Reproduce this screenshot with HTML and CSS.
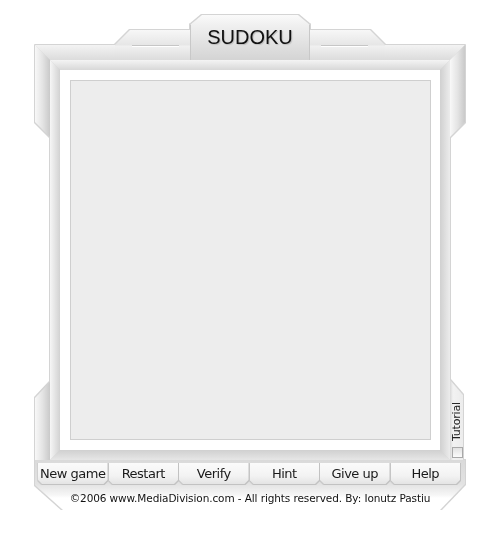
FILE: index.html
```html
<!DOCTYPE html>
<html lang="en">
<head>
<meta charset="utf-8">
<title>Sudoku</title>
<link rel="stylesheet" href="styles.css">
</head>
<body>
<div class="sudoku">
  <div class="bar bar-top-l"></div>
  <div class="tab-side tab-side-l"><span class="tab-rule"></span></div>
  <div class="tab-title"><h1 class="title">SUDOKU</h1></div>
  <div class="tab-side tab-side-r"><span class="tab-rule"></span></div>
  <div class="bar bar-top-r"></div>

  <div class="side side-l">
    <div class="piece piece-l-top"></div>
    <div class="piece piece-l-bottom"></div>
  </div>

  <div class="frame">
    <div class="edge edge-t"></div>
    <div class="edge edge-l"></div>
    <div class="edge edge-r"></div>
    <div class="edge edge-b"></div>
    <div class="well"><div class="board"></div></div>
  </div>

  <div class="side side-r">
    <div class="piece piece-r-top"></div>
    <label class="tutorial">
      <span class="tutorial-text">Tutorial</span>
      <input class="tutorial-check" type="checkbox">
    </label>
  </div>

  <div class="footer">
    <div class="footer-body">
      <nav class="buttons">
        <button class="btn" type="button">New game</button>
        <button class="btn" type="button">Restart</button>
        <button class="btn" type="button">Verify</button>
        <button class="btn" type="button">Hint</button>
        <button class="btn" type="button">Give up</button>
        <button class="btn" type="button">Help</button>
      </nav>
      <p class="copyright">©2006 www.MediaDivision.com - All rights reserved. By: Ionutz Pastiu</p>
    </div>
  </div>
</div>
</body>
</html>
```

FILE: styles.css
```css
html, body {
  margin: 0;
  background: #ffffff;
}

/* Skin laid out on a fixed grid: side bars | centre columns | side bars */
.sudoku {
  display: grid;
  grid-template-columns: 15px 65px 75px 120px 75px 65px 15px;
  grid-template-rows: 15px 15px 15px 400px 25px 25px;
  width: 430px;
  margin: 15px 0 0 35px;
  filter:
    drop-shadow(1px 0 0 #d4d4d4)
    drop-shadow(-1px 0 0 #d4d4d4)
    drop-shadow(0 1px 0 #d4d4d4)
    drop-shadow(0 -1px 0 #d4d4d4);
}

/* ---- top bars and tabs ---- */
.bar {
  background: linear-gradient(#f3f3f3, #dcdcdc);
}
.bar-top-l {
  grid-area: 3 / 1 / 4 / 3;
  clip-path: polygon(0 0, 100% 0, 100% 100%, 15px 100%);
}
.bar-top-r {
  grid-area: 3 / 6 / 4 / 8;
  clip-path: polygon(0 0, 100% 0, calc(100% - 15px) 100%, 0 100%);
}

.tab-side {
  display: flex;
  justify-content: center;
  padding-top: 15px;
  box-sizing: border-box;
  background: linear-gradient(#f7f7f7 0, #e6e6e6 15px, #f1f1f1 16px, #dcdcdc 100%);
}
.tab-side-l {
  grid-area: 2 / 3 / 4 / 4;
  clip-path: polygon(15px 0, 100% 0, 100% 100%, 0 100%, 0 15px);
  padding-left: 6px;
}
.tab-side-r {
  grid-area: 2 / 5 / 4 / 6;
  clip-path: polygon(0 0, calc(100% - 15px) 0, 100% 15px, 100% 100%, 0 100%);
  padding-right: 6px;
}
.tab-rule {
  display: block;
  width: 47px;
  height: 1px;
  background: #c6c6c6;
  border-bottom: 1px solid #ffffff;
}

.tab-title {
  grid-area: 1 / 4 / 4 / 5;
  clip-path: polygon(12px 0, calc(100% - 12px) 0, 100% 10px, 100% 100%, 0 100%, 0 10px);
  background: linear-gradient(#fafafa 0, #f0f0f0 10px, #d4d4d4 100%);
  box-shadow: inset 1px 0 0 #c8c8c8, inset -1px 0 0 #c8c8c8;
  display: flex;
  justify-content: center;
}
.title {
  margin: 0;
  padding-top: 11px;
  font: 400 20px/23px "Liberation Sans", Arial, sans-serif;
  color: #111111;
  text-shadow: 1px 1px 1px #bdbdbd;
}

/* ---- outer side pieces ---- */
.side {
  grid-row: 3 / 5;
  display: flex;
  flex-direction: column;
  justify-content: space-between;
}
.side-l { grid-column: 1; }
.side-r { grid-column: 7; }

.piece {
  background: linear-gradient(to right, #f8f8f8 0, #e4e4e4 50%, #c9c9c9 100%);
}
.piece-l-top {
  height: 92px;
  clip-path: polygon(0 0, 100% 15px, 100% 100%, 0 calc(100% - 15px));
}
.piece-l-bottom {
  height: 78px;
  clip-path: polygon(0 16px, 100% 0, 100% 100%, 0 100%);
}
.piece-r-top {
  height: 92px;
  clip-path: polygon(100% 0, 100% calc(100% - 15px), 0 100%, 0 15px);
}

.tutorial {
  display: flex;
  flex-direction: column;
  align-items: center;
  width: 13px;
  height: 80px;
  box-sizing: border-box;
  padding: 20px 0 2px;
  clip-path: polygon(0 0, 100% 15px, 100% 100%, 0 100%);
  background: linear-gradient(to right, #d8d8d8 0, #f2f2f2 3px, #ececec 100%);
}
.tutorial-text {
  writing-mode: vertical-rl;
  transform: rotate(180deg);
  font: 11px/12px "DejaVu Sans", Verdana, sans-serif;
  letter-spacing: -0.2px;
  color: #222222;
  height: 43px;
  text-align: center;
}
.tutorial-check {
  appearance: none;
  -webkit-appearance: none;
  margin: 4px 0 0 1px;
  width: 11px;
  height: 11px;
  box-sizing: border-box;
  border: 1px solid #a9a9a9;
  background: linear-gradient(#e2e2e2, #fbfbfb);
}

/* ---- board frame ---- */
.frame {
  grid-area: 4 / 2 / 5 / 7;
  display: grid;
  grid-template-columns: 10px 1fr 10px;
  grid-template-rows: 10px 1fr 10px;
}
.edge-t {
  grid-area: 1 / 1 / 2 / 4;
  clip-path: polygon(0 0, 100% 0, calc(100% - 10px) 100%, 10px 100%);
  background: linear-gradient(#f4f4f4, #d8d8d8);
}
.edge-b {
  grid-area: 3 / 1 / 4 / 4;
  clip-path: polygon(10px 0, calc(100% - 10px) 0, 100% 100%, 0 100%);
  background: linear-gradient(#d0d0d0, #e6e6e6);
}
.edge-l {
  grid-area: 1 / 1 / 4 / 2;
  clip-path: polygon(0 0, 100% 10px, 100% calc(100% - 10px), 0 100%);
  background: linear-gradient(to right, #f6f6f6, #d2d2d2);
}
.edge-r {
  grid-area: 1 / 3 / 4 / 4;
  clip-path: polygon(100% 0, 100% 100%, 0 calc(100% - 10px), 0 10px);
  background: linear-gradient(to right, #d0d0d0, #ececec);
}
.well {
  grid-area: 2 / 2;
  background: #ffffff;
  padding: 10px 9px 10px 10px;
}
.board {
  height: 100%;
  box-sizing: border-box;
  border: 1px solid #cfcfcf;
  background: #ededed;
}

/* ---- button strip and credits ---- */
.footer {
  grid-area: 5 / 1 / 7 / 8;
}
.footer-body {
  height: 100%;
  clip-path: polygon(0 0, 100% 0, 100% 24px, calc(100% - 25px) 100%, 28px 100%, 0 25px);
  background: linear-gradient(#dadada 0, #e2e2e2 24px, #e6e6e6 26px, #f6f6f6 35px, #ffffff 38px);
  display: flex;
  flex-direction: column;
}
.buttons {
  display: flex;
  gap: 1px;
  padding: 3px 5px 0 3px;
  height: 25px;
  box-sizing: border-box;
  filter:
    drop-shadow(1px 0 0 #c2c2c2)
    drop-shadow(0 1px 0 #c2c2c2)
    drop-shadow(-1px 0 0 #d0d0d0);
}
.btn {
  flex: 1;
  margin: 0;
  padding: 0;
  border: 0;
  height: 21px;
  clip-path: polygon(0 0, 100% 0, 100% calc(100% - 4px), calc(100% - 4px) 100%, 4px 100%, 0 calc(100% - 4px));
  background: linear-gradient(#fbfbfb 0, #f3f3f3 60%, #e4e4e4 100%);
  font: 13px/20px "DejaVu Sans", Verdana, sans-serif;
  letter-spacing: -0.5px;
  color: #1a1a1a;
}
.copyright {
  margin: 0;
  padding-top: 7px;
  text-align: center;
  font: 10.5px/13px "DejaVu Sans", Verdana, sans-serif;
  letter-spacing: -0.1px;
  color: #111111;
}
```
